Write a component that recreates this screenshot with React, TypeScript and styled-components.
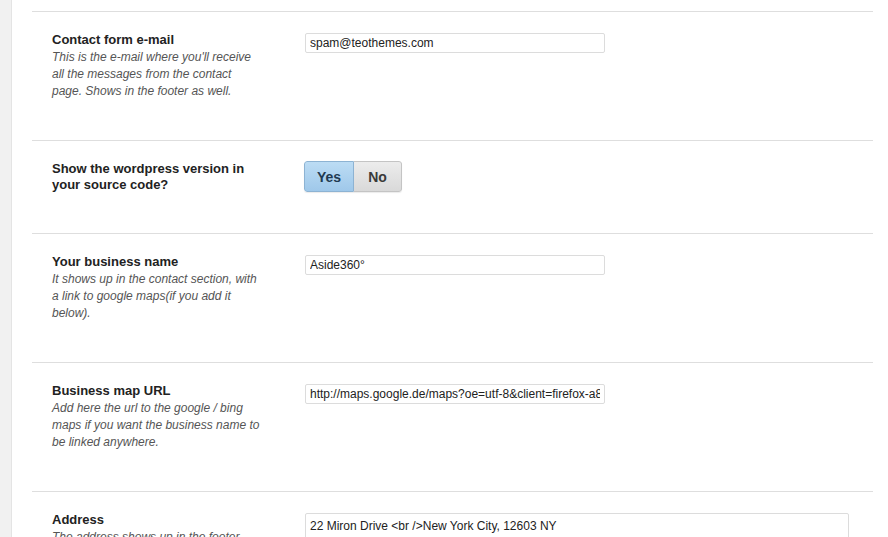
import styled, { createGlobalStyle } from "styled-components";

const GlobalStyle = createGlobalStyle`
  html, body {
    margin: 0;
    padding: 0;
    background: #ffffff;
    font-family: "Liberation Sans", Arial, Helvetica, sans-serif;
  }
`;

const Page = styled.div`
  display: flex;
  min-height: 537px;
  overflow: hidden;
`;

const Sidebar = styled.div`
  width: 11px;
  flex-shrink: 0;
  background: #f1f1f1;
  border-right: 1px solid #e4e4e4;
`;

const Main = styled.div`
  flex: 1;
  padding: 11px 15px 0 20px;
`;

const Section = styled.div`
  display: grid;
  grid-template-columns: 253px 1fr;
  padding: 20px 0 40px 20px;
  border-top: 1px solid #dedede;
`;

const Label = styled.div`
  width: 212px;
`;

const Title = styled.h3`
  margin: 0;
  font-size: 13px;
  line-height: 16px;
  font-weight: bold;
  color: #222;
`;

const Desc = styled.p`
  margin: 1px 0 0;
  font-size: 12px;
  line-height: 17px;
  font-style: italic;
  color: #555;
`;

const Field = styled.div`
  padding-top: 1px;
`;

const TextInput = styled.input`
  box-sizing: border-box;
  width: 300px;
  height: 20px;
  padding: 0 4px;
  border: 1px solid #dcdcdc;
  border-radius: 2px;
  font-family: "Liberation Sans", Arial, sans-serif;
  font-size: 12px;
  color: #222;
  background: #fff;
  outline: none;
`;

const AddressBox = styled.textarea`
  box-sizing: border-box;
  display: block;
  width: 544px;
  height: 60px;
  padding: 4px 4px;
  border: 1px solid #dcdcdc;
  border-radius: 2px;
  font-family: "Liberation Sans", Arial, sans-serif;
  font-size: 12px;
  line-height: 16px;
  color: #222;
  resize: none;
  outline: none;
`;

const Toggle = styled.div`
  display: inline-flex;
  height: 31px;
  margin-left: -1px;
  border-radius: 3px;
  overflow: hidden;
  box-shadow: 0 1px 1px rgba(0, 0, 0, 0.08);
`;

const ToggleButton = styled.button<{ $active?: boolean }>`
  box-sizing: border-box;
  width: ${(p) => (p.$active ? "50px" : "48px")};
  height: 31px;
  padding: 0;
  font-family: "Liberation Sans", Arial, sans-serif;
  font-size: 14px;
  font-weight: bold;
  cursor: pointer;
  border: 1px solid ${(p) => (p.$active ? "#8db3d3" : "#c4c4c4")};
  color: ${(p) => (p.$active ? "#1f3a52" : "#3a3a3a")};
  background: ${(p) =>
    p.$active
      ? "linear-gradient(#bcdcf4, #9fc8ea)"
      : "linear-gradient(#ececec, #d9d9d9)"};
  border-radius: ${(p) => (p.$active ? "3px 0 0 3px" : "0 3px 3px 0")};
  ${(p) => (p.$active ? "" : "border-left: none;")}
`;

export default function App() {
  return (
    <>
      <GlobalStyle />
      <Page>
        <Sidebar />
        <Main>
          <Section>
            <Label>
              <Title>Contact form e-mail</Title>
              <Desc>
                This is the e-mail where you'll receive all the messages from the
                contact page. Shows in the footer as well.
              </Desc>
            </Label>
            <Field>
              <TextInput defaultValue="spam@teothemes.com" />
            </Field>
          </Section>

          <Section>
            <Label>
              <Title>Show the wordpress version in your source code?</Title>
            </Label>
            <div>
              <Toggle>
                <ToggleButton $active>Yes</ToggleButton>
                <ToggleButton>No</ToggleButton>
              </Toggle>
            </div>
          </Section>

          <Section>
            <Label>
              <Title>Your business name</Title>
              <Desc>
                It shows up in the contact section, with a link to google
                maps(if you add it below).
              </Desc>
            </Label>
            <Field>
              <TextInput defaultValue="Aside360°" />
            </Field>
          </Section>

          <Section>
            <Label>
              <Title>Business map URL</Title>
              <Desc>
                Add here the url to the google / bing maps if you want the
                business name to be linked anywhere.
              </Desc>
            </Label>
            <Field>
              <TextInput defaultValue="http://maps.google.de/maps?oe=utf-8&client=firefox-a8" />
            </Field>
          </Section>

          <Section>
            <Label>
              <Title>Address</Title>
              <Desc>The address shows up in the footer.</Desc>
            </Label>
            <Field>
              <AddressBox defaultValue="22 Miron Drive <br />New York City, 12603 NY" />
            </Field>
          </Section>
        </Main>
      </Page>
    </>
  );
}
